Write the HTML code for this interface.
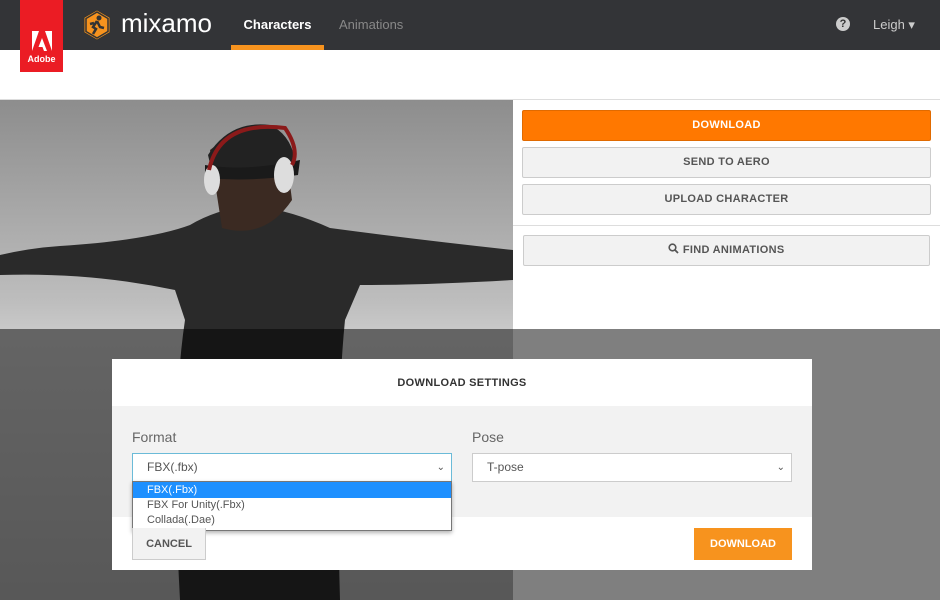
<!DOCTYPE html>
<html><head><meta charset="utf-8"><style>
*{box-sizing:border-box;margin:0;padding:0}
body{width:940px;height:600px;overflow:hidden;position:relative;background:#fff;font-family:"Liberation Sans",sans-serif}
.nav{position:absolute;left:0;top:0;width:940px;height:50px;background:#333437}
.adobe{position:absolute;left:20px;top:0;width:43px;height:72px;background:#eb1c24;color:#fff;font-weight:bold;text-align:center}
.tab{position:absolute;top:0;height:50px;line-height:50px;font-size:14px}
.btn{position:absolute;left:522px;width:409px;height:31px;border:1px solid #ccc;background:#f2f2f2;color:#555;font-weight:bold;font-size:11px;text-align:center;line-height:29px;border-radius:2px;letter-spacing:.3px}
.view{position:absolute;left:0;top:100px;width:513px;height:500px;background:linear-gradient(#8d8d8d,#bdbdbd 200px,#c9c9c9 230px,#b0b0b0 500px)}
.ov{position:absolute;left:0;top:329px;width:940px;height:271px;background:rgba(0,0,0,.5)}
.modal{position:absolute;left:112px;top:359px;width:700px;height:211px;background:#fff}
.sel{position:absolute;height:29px;border:1px solid #ccc;background:#fff;font-size:12px;color:#555;padding-left:14px;line-height:27px}
</style></head><body>
<div class="nav">
 <div class="adobe"><svg width="24" height="22" viewBox="0 0 24 22" style="margin-top:30px;display:block;margin-left:10px"><path d="M2 1h7L2 21zM15 1h7v20zM12 8l5 13h-3l-1.5-4h-4z" fill="#fff"/></svg><div style="margin-top:2px;font-size:9px">Adobe</div></div>
 <svg style="position:absolute;left:82px;top:9px" width="30" height="32" viewBox="0 0 30 32"><path d="M15 1L28 8.5V23.5L15 31L2 23.5V8.5Z" fill="#f7931e" stroke="#333" stroke-width="1"/><path d="M15 3L26 9.5V22.5L15 29L4 22.5V9.5Z" fill="none" stroke="#333" stroke-width="1.5"/><circle cx="17" cy="9" r="2.5" fill="#333"/><path d="M15 12l-4 6 3 2-3 5M15 12l3 6 4 1M12 14l-4 1" stroke="#333" stroke-width="2.5" fill="none"/></svg>
 <div style="position:absolute;left:121px;top:8px;font-size:26px;color:#fff">mixamo</div>
 <div class="tab" style="left:231px;width:93px;text-align:center;color:#fff;font-weight:bold;font-size:13px">Characters</div>
 <div style="position:absolute;left:231px;top:45px;width:93px;height:5px;background:#f7931e"></div>
 <div class="tab" style="left:339px;color:#888;font-size:13px">Animations</div>
 <div style="position:absolute;left:836px;top:17px;width:14px;height:14px;border-radius:50%;background:#ccc;color:#333;font-size:11px;font-weight:bold;text-align:center;line-height:14px">?</div>
 <div class="tab" style="left:873px;color:#ccc;font-size:13px">Leigh ▾</div>
</div>
<div style="position:absolute;left:0;top:99px;width:940px;height:1px;background:#ddd"></div>
<div class="view">
 <svg width="513" height="500" viewBox="0 100 513 500">
  <path d="M0 255 Q30 248 60 246 Q150 240 190 225 Q215 210 250 205 Q290 210 330 228 Q420 240 513 250 L513 280 Q430 285 360 285 L345 320 Q335 420 340 600 L180 600 Q170 420 185 320 L175 290 Q90 272 0 275Z" fill="#2a2a2a"/>
  <path d="M210 150 Q240 125 285 145 L292 200 Q265 240 222 228 Z" fill="#3b2a22"/>
  <path d="M208 155 Q230 120 270 125 Q292 135 296 165 L212 172 Z" fill="#222"/>
  <path d="M205 165 Q245 172 300 160 L298 175 Q250 182 205 178Z" fill="#1a1a1a"/>
  <ellipse cx="212" cy="180" rx="8" ry="15" fill="#ddd"/><ellipse cx="284" cy="175" rx="10" ry="18" fill="#ddd"/>
  <path d="M209 170 Q220 120 285 128 Q300 150 292 165" fill="none" stroke="#8b1a1a" stroke-width="4"/>
 </svg>
</div>
<div class="btn" style="top:110px;background:#ff7800;border-color:#e06a00;color:#fff">DOWNLOAD</div>
<div class="btn" style="top:147px">SEND TO AERO</div>
<div class="btn" style="top:184px">UPLOAD CHARACTER</div>
<div style="position:absolute;left:513px;top:225px;width:427px;height:1px;background:#ddd"></div>
<div class="btn" style="top:235px;left:523px;width:407px"><svg width="11" height="11" viewBox="0 0 11 11" style="vertical-align:-1px"><circle cx="4.5" cy="4.5" r="3.3" fill="none" stroke="#555" stroke-width="1.6"/><path d="M7 7l3 3" stroke="#555" stroke-width="1.8"/></svg> FIND ANIMATIONS</div>
<div class="ov"></div>
<div class="modal">
 <div style="position:absolute;top:18px;width:700px;text-align:center;font-size:11px;font-weight:bold;color:#333;letter-spacing:.3px">DOWNLOAD SETTINGS</div>
 <div style="position:absolute;top:47px;width:700px;height:111px;background:#f2f2f2"></div>
 <div style="position:absolute;left:20px;top:70px;font-size:14px;color:#666">Format</div>
 <div style="position:absolute;left:360px;top:70px;font-size:14px;color:#666">Pose</div>
 <div class="sel" style="left:20px;top:94px;width:320px;border-color:#6bbbd8">FBX(.fbx)<span style="position:absolute;right:6px;top:0;font-size:10px">&#8964;</span></div>
 <div class="sel" style="left:360px;top:94px;width:320px">T-pose<span style="position:absolute;right:6px;top:0;font-size:10px">&#8964;</span></div>
 <div style="position:absolute;left:20px;top:122px;width:320px;height:50px;background:#fff;border:1px solid #777;box-shadow:0 2px 4px rgba(0,0,0,.3);font-size:11px;color:#555">
  <div style="background:#1e90ff;color:#fff;height:16px;line-height:16px;padding-left:14px">FBX(.Fbx)</div>
  <div style="height:15px;line-height:15px;padding-left:14px">FBX For Unity(.Fbx)</div>
  <div style="height:15px;line-height:15px;padding-left:14px">Collada(.Dae)</div>
 </div>
 <div style="position:absolute;left:20px;top:169px;width:74px;height:32px;border:1px solid #ccc;border-top:none;background:#f2f2f2;color:#555;font-size:11px;font-weight:bold;text-align:center;line-height:32px">CANCEL</div>
 <div style="position:absolute;left:582px;top:169px;width:98px;height:32px;background:#f7931e;color:#fff;font-size:11px;font-weight:bold;text-align:center;line-height:32px">DOWNLOAD</div>
</div>
</body></html>
